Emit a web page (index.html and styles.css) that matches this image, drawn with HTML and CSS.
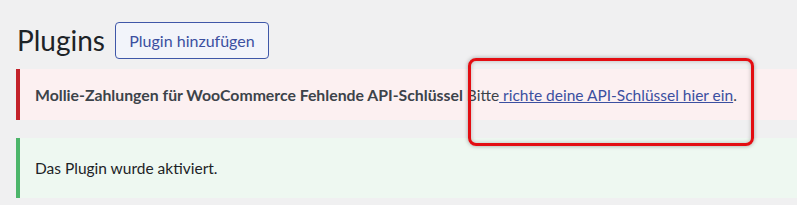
FILE: index.html
```html
<!DOCTYPE html>
<html lang="de">
<head>
<meta charset="utf-8">
<title>Plugins</title>
<link rel="stylesheet" href="styles.css">
</head>
<body>
<div class="wrap">
  <div class="page-head">
    <h1 class="page-title">Plugins</h1>
    <a class="add-btn" href="#">Plugin hinzufügen</a>
  </div>
  <div class="notice notice-error">
    <p><strong>Mollie-Zahlungen für WooCommerce Fehlende API-Schlüssel</strong> Bitte<a href="#"> richte deine API-Schlüssel hier ein</a>.</p>
  </div>
  <div class="notice notice-success">
    <p>Das Plugin wurde aktiviert.</p>
  </div>
  <div class="highlight"></div>
</div>
</body>
</html>
```
FILE: styles.css
```css
html, body {
  margin: 0;
  padding: 0;
}
body {
  background: #f0f0f1;
  font-family: Lato, "Open Sans", sans-serif;
  color: #3c434a;
  width: 797px;
  height: 205px;
  overflow: hidden;
}
.wrap {
  position: relative;
  padding: 22px 0 0 16px;
}
.page-head {
  display: flex;
  align-items: center;
  height: 37px;
}
.page-title {
  margin: 0 10px 0 1px;
  font-size: 28px;
  font-weight: 400;
  line-height: 37px;
  color: #1d2327;
}
.add-btn {
  box-sizing: border-box;
  height: 37px;
  width: 154px;
  display: flex;
  align-items: center;
  justify-content: center;
  border: 1px solid #3f57a8;
  border-radius: 4px;
  background: #f2f4fa;
  color: #3b4fa0;
  font-size: 16px;
  text-decoration: none;
}
.notice {
  display: flex;
  align-items: center;
  border-left: 4px solid;
  box-sizing: border-box;
  padding-left: 15px;
}
.notice p {
  margin: 0;
  font-size: 15.5px;
  line-height: 22px;
  white-space: nowrap;
}
.notice-error {
  margin-top: 10px;
  height: 51px;
  border-left-color: #c3222a;
  background: #fcf0f1;
}
.notice-error strong {
  font-size: 15.8px;
  font-weight: 700;
  color: #3c434a;
}
.notice-error a {
  color: #3b4fa0;
}
.notice-success {
  margin-top: 18px;
  height: 60px;
  border-left-color: #4cb56a;
  background: #eef8f1;
}
.notice-success p {
  color: #1d2327;
}
.highlight {
  position: absolute;
  left: 468px;
  top: 58px;
  width: 286px;
  height: 88px;
  box-sizing: border-box;
  border: 3px solid #e30d12;
  border-radius: 8px;
  box-shadow: 0 0 4px rgba(0, 0, 0, 0.35), inset 0 0 4px rgba(0, 0, 0, 0.25);
}
```
